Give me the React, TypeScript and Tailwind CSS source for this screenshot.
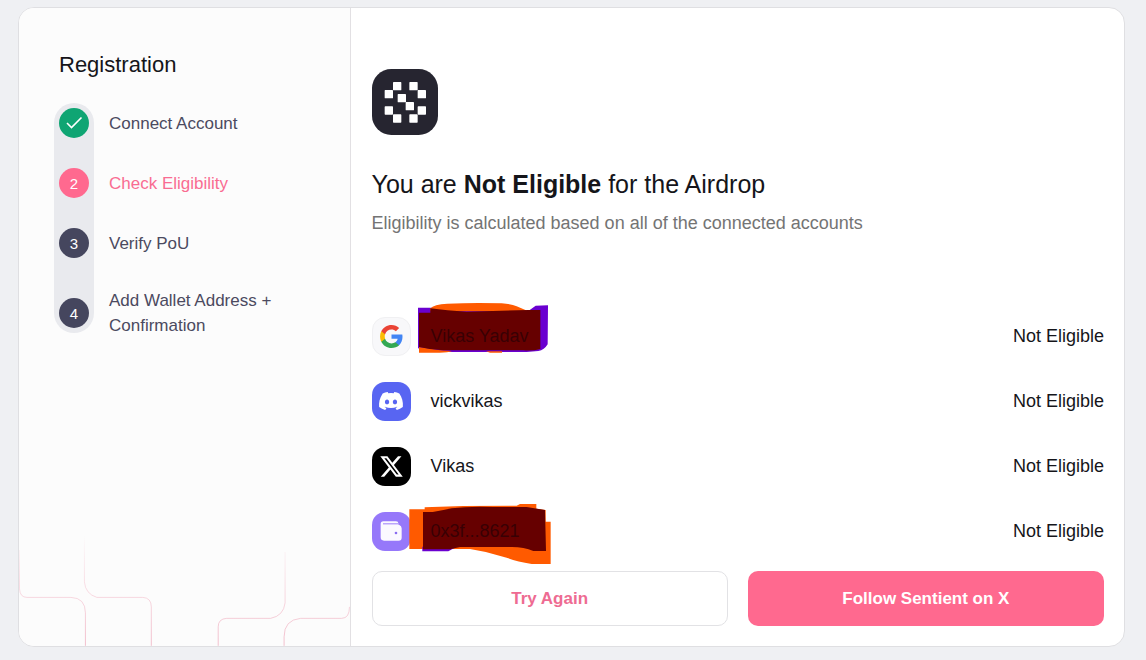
import type { ReactNode } from 'react'
import { FaDiscord, FaXTwitter } from 'react-icons/fa6'

const steps = [
    { id: 1, label: 'Connect Account', status: 'done' },
    { id: 2, label: 'Check Eligibility', status: 'active' },
    { id: 3, label: 'Verify PoU', status: 'todo' },
    { id: 4, label: 'Add Wallet Address + Confirmation', status: 'todo' },
]

const circleColor: Record<string, string> = {
    done: 'bg-[#0fa573]',
    active: 'bg-[#ff698f]',
    todo: 'bg-[#45465e]',
}

function CheckIcon() {
    return (
        <svg viewBox="0 0 30 30" className="h-[30px] w-[30px]" fill="none" stroke="white" strokeWidth="1.6" aria-hidden="true">
            <path d="M8 15 L12.5 19.5 L22.5 9.5" />
        </svg>
    )
}

function SentientLogo() {
    const squares = [
        [99, 96], [148, 96],
        [74, 120], [173, 120],
        [113, 132], [137, 156],
        [74, 169], [173, 169],
        [99, 193], [148, 193],
    ]

    return (
        <svg viewBox="36 57 198 198" className="h-[66px] w-[66px]" role="img" aria-label="Sentient">
            <rect x="36" y="57" width="198" height="198" rx="58" fill="#262530" />
            {squares.map(([x, y]) => (
                <rect key={`${x}-${y}`} x={x} y={y} width="25" height="25" rx="2" fill="white" />
            ))}
        </svg>
    )
}

function GoogleIcon() {
    return (
        <svg viewBox="0 0 24 24" className="h-[25px] w-[25px]" aria-hidden="true">
            <path fill="#4285F4" d="M22.56 12.25c0-.78-.07-1.53-.2-2.25H12v4.26h5.92c-.26 1.37-1.04 2.53-2.21 3.31v2.77h3.57c2.08-1.92 3.28-4.74 3.28-8.09z" />
            <path fill="#34A853" d="M12 23c2.97 0 5.46-.98 7.28-2.66l-3.57-2.77c-.98.66-2.23 1.06-3.71 1.06-2.86 0-5.29-1.93-6.16-4.53H2.18v2.84C3.99 20.53 7.7 23 12 23z" />
            <path fill="#FBBC05" d="M5.84 14.09c-.22-.66-.35-1.36-.35-2.09s.13-1.43.35-2.09V7.07H2.18C1.43 8.55 1 10.22 1 12s.43 3.45 1.18 4.93l3.66-2.84z" />
            <path fill="#EA4335" d="M12 5.38c1.62 0 3.06.56 4.21 1.64l3.15-3.15C17.45 2.09 14.97 1 12 1 7.7 1 3.99 3.47 2.18 7.07l3.66 2.84c.87-2.6 3.3-4.53 6.16-4.53z" />
        </svg>
    )
}

function WalletIcon() {
    return (
        <svg viewBox="60 274 66 60" className="h-5 w-[22px]" aria-hidden="true">
            <path d="M70 275 H108 Q115 275 115 281 V285 H117 Q125 288 125 296 V324 Q125 333 116 333 H72 Q62 333 62 323 V283 Q62 275 70 275 Z" fill="#fbf9ff" />
            <path d="M69 282.5 H115" stroke="#9a7bfa" strokeWidth="3" />
            <circle cx="108" cy="310" r="4" fill="#8a6cf0" />
        </svg>
    )
}

// marker strokes that hide the account name
function MarkerTop() {
    return (
        <svg viewBox="144 21 441 192" className="pointer-events-none absolute -top-3.5 left-9 h-16 w-[147px]" aria-hidden="true">
            <path d="M174 38 H220 L505 48 L527 32 L564 31 L563 148 Q553 165 535 168 L500 171 H240 L174 160 Z" fill="#6a00d0" />
            <path d="M210 41 Q222 28 262 26 Q345 22 425 25 Q455 27 470 34 L505 49 H212 Z" fill="#ff5a00" />
            <path d="M177 156 L240 166 L276 168 Q262 174 230 173 H177 Z" fill="#ff5a00" />
            <path d="M378 169 H426 V173 H390 Z" fill="#ff5a00" />
            <path d="M177 53 H211 V40 Q260 47 320 50 L505 45 H541 V162 Q520 168 490 166 H250 Q210 164 177 156 Z" fill="#660000" />
        </svg>
    )
}

function MarkerBottom() {
    return (
        <svg viewBox="144 216 441 192" className="pointer-events-none absolute -top-[9px] left-9 h-16 w-[147px]" aria-hidden="true">
            <path d="M148 238 H194 V232 L310 228 L470 227 L480 222 H529 V236 L557 240 V275 H572 V402 H515 Q470 394 440 383 Q385 365 330 357 H148 Z" fill="#ff5a00" />
            <path d="M187 350 H290 L265 364 H187 Z" fill="#6a00d0" />
            <path d="M189 246 H218 Q245 242 275 235 Q330 228 400 231 H500 L555 240 L558 363 H520 Q490 350 450 351 H300 L270 358 H189 Z" fill="#660000" />
        </svg>
    )
}

function CircuitLines() {
    return (
        <svg viewBox="19 530 331 116" className="pointer-events-none absolute bottom-0 left-0 w-full" fill="none" stroke="url(#fade)" aria-hidden="true">
            <defs>
                <linearGradient id="fade" gradientUnits="userSpaceOnUse" x1="0" y1="535" x2="0" y2="646">
                    <stop offset="0" stopColor="#f5b5c6" stopOpacity="0" />
                    <stop offset="0.5" stopColor="#f3b9c8" stopOpacity="0.5" />
                    <stop offset="1" stopColor="#efafc0" stopOpacity="0.8" />
                </linearGradient>
            </defs>
            <path d="M19.5 550 V589 Q20 597.5 27 597.5 H71 Q85.5 598 85.5 613 V646" />
            <path d="M84.5 536 V582 Q85.5 594 97 597.5 H143 Q151.5 598 151.5 607 V646" />
            <path d="M285.5 552 V603 Q284 616 271 618.5 H227 Q218.5 619 218.5 627 V646" />
            <path d="M350 607 Q350 618.5 342 618.5 H301 Q284.5 620 284.5 637 V646" />
        </svg>
    )
}

type AccountProps = {
    name: string
    icon: ReactNode
    tile: string
    marker?: ReactNode
}

function AccountRow({ name, icon, tile, marker }: AccountProps) {
    return (
        <li className="relative flex h-10 items-center">
            <span className={`flex h-[39px] w-[39px] shrink-0 items-center justify-center rounded-[13px] ${tile}`}>{icon}</span>
            {marker}
            <span className={marker ? 'relative ml-5 text-[#380004]' : 'ml-5'}>{name}</span>
            <span className="ml-auto">Not Eligible</span>
        </li>
    )
}

export default function App() {
    return (
        <div className="min-h-screen bg-[#eff0f3] pt-[7px] pr-[21px] pb-[13px] pl-[18px] font-['Liberation_Sans',Arial,sans-serif] text-[17px] leading-[25px] text-[#15151a]">
            <div className="flex overflow-hidden rounded-2xl border border-[#dfdfe2] bg-white">
                <aside className="relative w-[30%] shrink-0 border-r border-[#e2e0e3] bg-[#fcfcfc] px-10 pt-10">
                    <h2 className="text-[22px] leading-[34px]">Registration</h2>
                    <ol className="relative mt-[26px] flex flex-col gap-[30px]">
                        <li aria-hidden="true" className="absolute -top-[5px] bottom-[5px] -left-[5px] w-10 rounded-full bg-[#e9eaee]" />
                        {steps.map((step) => (
                            <li key={step.id} className="relative flex items-center gap-5">
                                <span className={`flex h-[30px] w-[30px] shrink-0 items-center justify-center rounded-full text-[15px] text-white ${circleColor[step.status]}`}>
                                    {step.status === 'done' ? <CheckIcon /> : step.id}
                                </span>
                                <span className={step.status === 'active' ? 'text-[#f96c92]' : 'text-[#4b4a60]'}>{step.label}</span>
                            </li>
                        ))}
                    </ol>
                    <CircuitLines />
                </aside>

                <main className="min-w-0 flex-1 pt-[61px] pr-5 pb-5 pl-[21px]">
                    <SentientLogo />
                    <h1 className="mt-8 text-[25px] leading-[34px]">
                        You are <strong>Not Eligible</strong> for the Airdrop
                    </h1>
                    <p className="mt-2.5 text-lg leading-[25px] text-[#747474]">
                        Eligibility is calculated based on all of the connected accounts
                    </p>

                    <ul className="mt-20 flex flex-col gap-[25px] text-lg">
                        <AccountRow name="Vikas Yadav" tile="border border-[#f0f0f2] bg-[#f8f8fa]" icon={<GoogleIcon />} marker={<MarkerTop />} />
                        <AccountRow name="vickvikas" tile="bg-[#5865f2]" icon={<FaDiscord className="h-[26px] w-[26px] text-white" />} />
                        <AccountRow name="Vikas" tile="bg-black" icon={<FaXTwitter className="h-[25px] w-[25px] text-white" />} />
                        <AccountRow name="0x3f...8621" tile="bg-[#9678fa]" icon={<WalletIcon />} marker={<MarkerBottom />} />
                    </ul>

                    <div className="mt-5 grid grid-cols-2 gap-5 font-bold">
                        <button type="button" className="h-[55px] rounded-[10px] border border-[#e2e2e5] bg-white text-[#ee6b92]">
                            Try Again
                        </button>
                        <a href="#follow" className="flex h-[55px] items-center justify-center rounded-[10px] bg-[#ff698f] text-white">
                            Follow Sentient on X
                        </a>
                    </div>
                </main>
            </div>
        </div>
    )
}
